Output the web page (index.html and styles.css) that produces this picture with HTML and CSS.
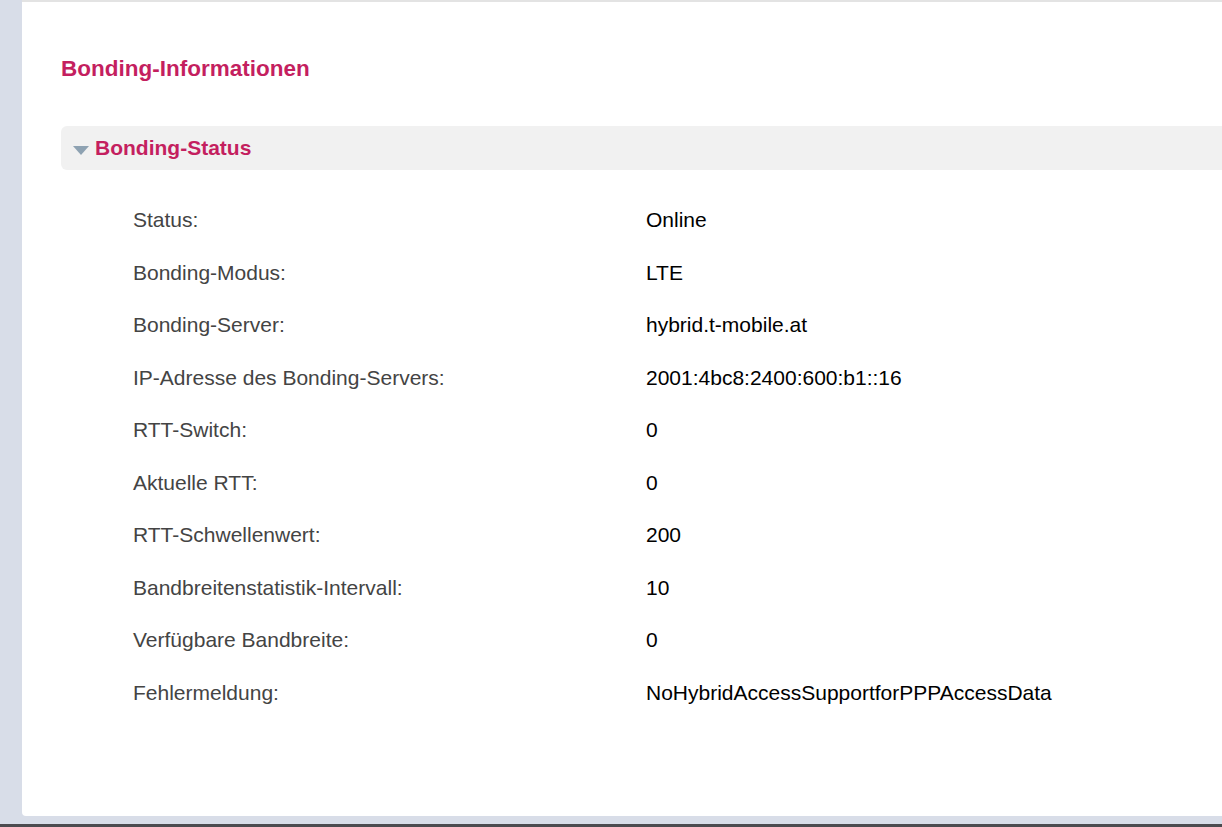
FILE: index.html
```html
<!DOCTYPE html>
<html lang="de">
<head>
<meta charset="utf-8">
<title>Bonding-Informationen</title>
<link rel="stylesheet" href="styles.css">
</head>
<body>
<div class="page">
  <main class="card">
    <h1 class="title">Bonding-Informationen</h1>
    <section class="section">
      <div class="section-head">
        <svg class="caret" width="16" height="9" viewBox="0 0 16 9"><path d="M0 0 H16 L8 9 Z" fill="#8ea2b2"/></svg>
        <span class="section-title">Bonding-Status</span>
      </div>
      <div class="rows">
        <div class="row"><span class="label">Status:</span><span class="value">Online</span></div>
        <div class="row"><span class="label">Bonding-Modus:</span><span class="value">LTE</span></div>
        <div class="row"><span class="label">Bonding-Server:</span><span class="value">hybrid.t-mobile.at</span></div>
        <div class="row"><span class="label">IP-Adresse des Bonding-Servers:</span><span class="value">2001:4bc8:2400:600:b1::16</span></div>
        <div class="row"><span class="label">RTT-Switch:</span><span class="value">0</span></div>
        <div class="row"><span class="label">Aktuelle RTT:</span><span class="value">0</span></div>
        <div class="row"><span class="label">RTT-Schwellenwert:</span><span class="value">200</span></div>
        <div class="row"><span class="label">Bandbreitenstatistik-Intervall:</span><span class="value">10</span></div>
        <div class="row"><span class="label">Verfügbare Bandbreite:</span><span class="value">0</span></div>
        <div class="row"><span class="label">Fehlermeldung:</span><span class="value">NoHybridAccessSupportforPPPAccessData</span></div>
      </div>
    </section>
  </main>
  <div class="bottom-bar"></div>
</div>
</body>
</html>
```

FILE: styles.css
```css
html, body {
  margin: 0;
  padding: 0;
  overflow: hidden;
}
body {
  background: #d8dde8;
  font-family: "Liberation Sans", Arial, sans-serif;
  width: 1222px;
  height: 827px;
}
.page {
  height: 827px;
  display: flex;
  flex-direction: column;
}
.card {
  margin: 0 0 0 22px;
  background: #ffffff;
  border-top: 2px solid #e3e3e3;
  border-radius: 0 0 0 4px;
  height: 816px;
  width: 1230px;
  box-sizing: border-box;
  padding: 55px 0 0 39px;
}
.title {
  margin: 0;
  font-size: 22.5px;
  line-height: 24px;
  font-weight: bold;
  color: #c41f5f;
}
.section {
  margin-top: 45px;
}
.section-head {
  display: flex;
  align-items: center;
  height: 44px;
  background: #f1f1f1;
  border-radius: 6px 0 0 6px;
  padding-left: 12px;
}
.caret {
  margin-top: 5px;
  margin-right: 6px;
}
.section-title {
  font-size: 21px;
  font-weight: bold;
  color: #c41f5f;
}
.rows {
  padding: 34px 0 0 72px;
}
.row {
  display: flex;
  height: 52.5px;
  align-items: flex-start;
  font-size: 21px;
  line-height: 24px;
  padding-top: 4px;
  box-sizing: border-box;
}
.label {
  width: 513px;
  color: #444444;
}
.value {
  color: #000000;
}
.bottom-bar {
  margin-top: auto;
  height: 3px;
  background: #4b4b4f;
}
```
